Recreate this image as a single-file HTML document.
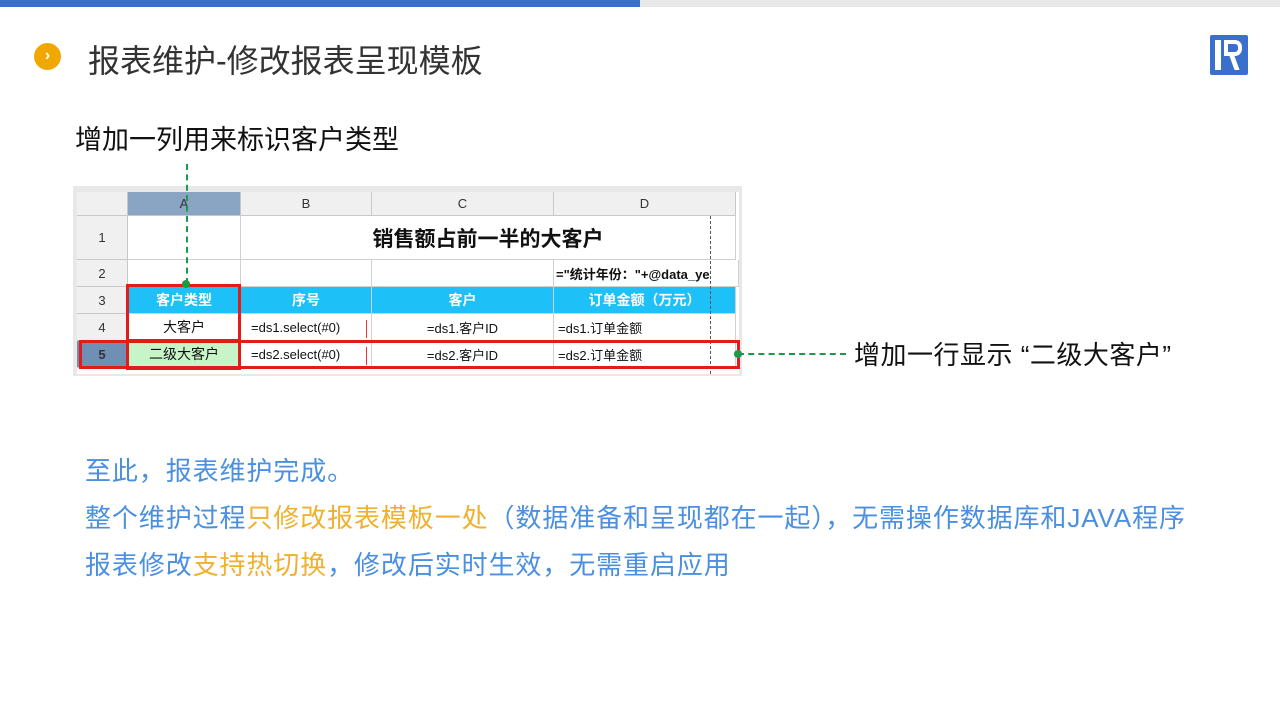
<!DOCTYPE html>
<html><head><meta charset="utf-8"><style>
*{margin:0;padding:0;box-sizing:border-box}
body{width:1280px;height:720px;position:relative;background:#fff;font-family:"Liberation Sans","Noto Sans CJK SC",sans-serif;overflow:hidden}
.a{position:absolute;white-space:nowrap}
.c{position:absolute;border-right:1px solid #d0d0d0;border-bottom:1px solid #d0d0d0;display:flex;align-items:center;justify-content:center;font-size:13px;color:#111;white-space:nowrap;overflow:hidden}
.h{background:#f0f0f0;color:#333;border-color:#c8c8c8}
.bl{background:#1ec0f8;color:#fff;font-weight:bold;font-size:14px}
.t{font-size:26px;color:#4a8fe0;letter-spacing:0.9px}
.y{color:#f0b030}
</style></head><body>
<div class="a" style="left:0;top:0;width:640px;height:7px;background:#3a6fcc"></div>
<div class="a" style="left:640px;top:0;width:640px;height:7px;background:#e8e8e8"></div>
<div class="a" style="left:34px;top:43px;width:27px;height:27px;border-radius:50%;background:#f0a800;color:#fff;font-size:16px;font-weight:bold;text-align:center;line-height:26px">›</div>
<div class="a" style="left:88px;top:36px;font-size:32px;color:#333">报表维护-修改报表呈现模板</div>
<div class="a" style="left:1210px;top:35px;width:38px;height:40px;background:#3a6fcc;border-radius:2px"><div class="a" style="left:5px;top:5px;width:6px;height:30px;background:#fff"></div><div class="a" style="left:14px;top:5px;width:18px;height:16px;border:4px solid #fff;border-radius:0 7px 7px 0"></div><div class="a" style="left:22px;top:21px;width:5px;height:14px;background:#fff;transform:skewX(20deg)"></div></div>
<div class="a" style="left:75px;top:118px;font-size:27px;color:#111">增加一列用来标识客户类型</div>

<div class="a" style="left:73px;top:186px;width:669px;height:190px;background:#e8e8e8"></div>
<div class="a" style="left:77px;top:192px;width:662px;height:182px;background:#fff"></div>
<div class="c h" style="left:77px;top:192px;width:51px;height:24px"></div>
<div class="c h" style="left:128px;top:192px;width:113px;height:24px;background:#8aa4c4">A</div>
<div class="c h" style="left:241px;top:192px;width:131px;height:24px">B</div>
<div class="c h" style="left:372px;top:192px;width:182px;height:24px">C</div>
<div class="c h" style="left:554px;top:192px;width:182px;height:24px">D</div>
<div class="c h" style="left:77px;top:216px;width:51px;height:44px">1</div>
<div class="c h" style="left:77px;top:260px;width:51px;height:27px">2</div>
<div class="c h" style="left:77px;top:287px;width:51px;height:27px">3</div>
<div class="c h" style="left:77px;top:314px;width:51px;height:27px">4</div>
<div class="c h" style="left:77px;top:341px;width:51px;height:27px;background:#6f8fb4;font-weight:bold">5</div>
<div class="c" style="left:128px;top:216px;width:113px;height:44px"></div>
<div class="c" style="left:241px;top:216px;width:495px;height:44px;font-size:21px;font-weight:bold">销售额占前一半的大客户</div>
<div class="c" style="left:128px;top:260px;width:113px;height:27px"></div>
<div class="c" style="left:241px;top:260px;width:131px;height:27px"></div>
<div class="c" style="left:372px;top:260px;width:182px;height:27px"></div>
<div class="c" style="left:554px;top:260px;width:185px;height:27px;justify-content:flex-start;font-weight:bold;padding-left:2px">="统计年份："+@data_ye</div>
<div class="c bl" style="left:128px;top:287px;width:113px;height:27px">客户类型</div>
<div class="c bl" style="left:241px;top:287px;width:131px;height:27px">序号</div>
<div class="c bl" style="left:372px;top:287px;width:182px;height:27px">客户</div>
<div class="c bl" style="left:554px;top:287px;width:182px;height:27px">订单金额（万元）</div>
<div class="c" style="left:128px;top:314px;width:113px;height:27px;font-size:14px">大客户</div>
<div class="c" style="left:241px;top:314px;width:131px;height:27px;justify-content:flex-start;padding-left:10px">=ds1.select(#0)</div>
<div class="c" style="left:372px;top:314px;width:182px;height:27px">=ds1.客户ID</div>
<div class="c" style="left:554px;top:314px;width:182px;height:27px;justify-content:flex-start;padding-left:4px">=ds1.订单金额</div>
<div class="c" style="left:128px;top:341px;width:113px;height:27px;background:#c8f5c8;font-size:14px">二级大客户</div>
<div class="c" style="left:241px;top:341px;width:131px;height:27px;justify-content:flex-start;padding-left:10px">=ds2.select(#0)</div>
<div class="c" style="left:372px;top:341px;width:182px;height:27px">=ds2.客户ID</div>
<div class="c" style="left:554px;top:341px;width:182px;height:27px;justify-content:flex-start;padding-left:4px">=ds2.订单金额</div>
<div class="a" style="left:710px;top:216px;height:158px;border-left:1px dashed #555"></div>
<div class="a" style="left:366px;top:320px;width:1px;height:18px;background:#e33"></div>
<div class="a" style="left:366px;top:347px;width:1px;height:18px;background:#e33"></div>
<div class="a" style="left:126px;top:284px;width:115px;height:58px;border:3px solid #e41b1b"></div>
<div class="a" style="left:79px;top:340px;width:661px;height:29px;border:3px solid #e41b1b"></div>
<div class="a" style="left:126px;top:339px;width:115px;height:31px;border:3px solid #e41b1b"></div>
<div class="a" style="left:186px;top:164px;height:120px;border-left:2px dashed #1a9a4a"></div>
<div class="a" style="left:182px;top:280px;width:8px;height:8px;border-radius:50%;background:#1a9a4a"></div>
<div class="a" style="left:738px;top:353px;width:108px;border-top:2px dashed #1a9a4a"></div>
<div class="a" style="left:734px;top:350px;width:8px;height:8px;border-radius:50%;background:#1a9a4a"></div>
<div class="a" style="left:854px;top:335px;font-size:26px;color:#111;letter-spacing:0.5px">增加一行显示 “二级大客户”</div>

<div class="a t" style="left:85px;top:451px">至此，报表维护完成。</div>
<div class="a t" style="left:85px;top:498px">整个维护过程<span class="y">只修改报表模板一处</span>（数据准备和呈现都在一起），无需操作数据库和JAVA程序</div>
<div class="a t" style="left:85px;top:545px">报表修改<span class="y">支持热切换</span>，修改后实时生效，无需重启应用</div>
</body></html>
